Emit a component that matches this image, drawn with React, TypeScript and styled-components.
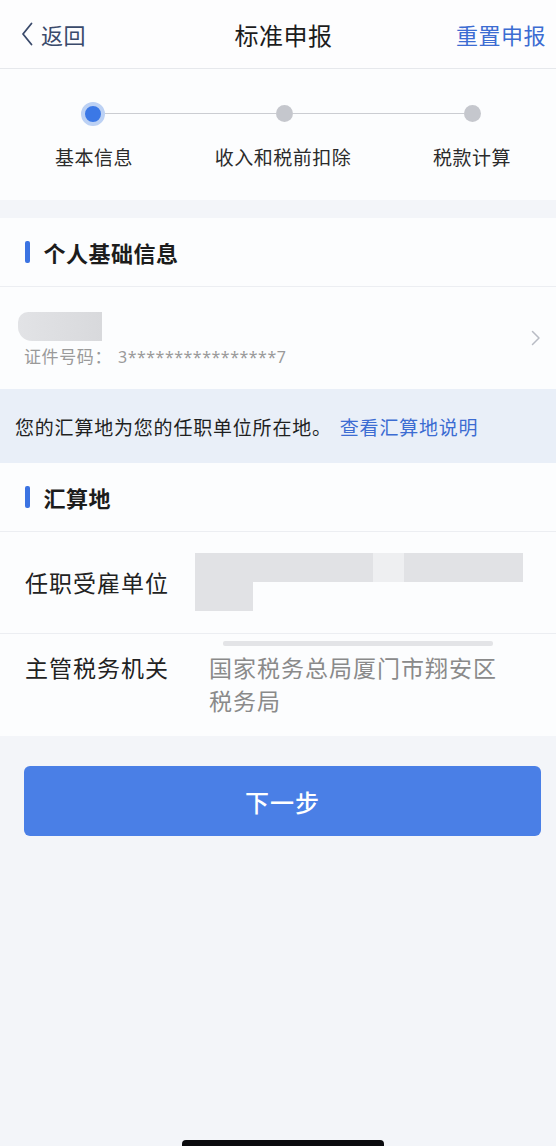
import React from 'react';
import styled, { createGlobalStyle } from 'styled-components';

const GlobalStyle = createGlobalStyle`
  html, body {
    margin: 0;
    padding: 0;
    background: #f3f5f9;
    overflow-x: hidden;
  }
  body {
    font-family: "Noto Sans CJK SC", "Noto Sans", sans-serif;
    color: #222;
  }
`;

const steps = ['基本信息', '收入和税前扣除', '税款计算'];

export default function App() {
  return (
    <Page>
      <GlobalStyle />

      <Header>
        <Back>
          <svg width="12" height="24" viewBox="0 0 12 24">
            <path d="M10.5 1.5 L2 12 L10.5 22.5" fill="none" stroke="#3a4a6b" strokeWidth="1.8" strokeLinecap="round" strokeLinejoin="round" />
          </svg>
          <BackText>返回</BackText>
        </Back>
        <Title>标准申报</Title>
        <HeaderAction>重置申报</HeaderAction>
      </Header>

      <StepsCard>
        <Track>
          <ActiveDot />
          <TrackLine />
          <Dot />
          <TrackLine />
          <Dot />
        </Track>
        <StepLabels>
          {steps.map((s) => (
            <StepLabel key={s}>{s}</StepLabel>
          ))}
        </StepLabels>
      </StepsCard>

      <Card>
        <SectionHead>
          <Bar />
          <SectionTitle>个人基础信息</SectionTitle>
        </SectionHead>
        <PersonRow>
          <PersonInfo>
            <NameBlur />
            <IdLine>
              证件号码：<IdNumber>3****************7</IdNumber>
            </IdLine>
          </PersonInfo>
          <svg width="10" height="16" viewBox="0 0 10 16">
            <path d="M1.5 1.5 L8 8 L1.5 14.5" fill="none" stroke="#b8bcc4" strokeWidth="1.5" strokeLinecap="round" strokeLinejoin="round" />
          </svg>
        </PersonRow>
      </Card>

      <Notice>
        您的汇算地为您的任职单位所在地。<NoticeLink>查看汇算地说明</NoticeLink>
      </Notice>

      <Card>
        <SectionHead>
          <Bar />
          <SectionTitle>汇算地</SectionTitle>
        </SectionHead>
        <FieldRow $align="center">
          <FieldLabel>任职受雇单位</FieldLabel>
          <Redacted>
            <RedactedLine>
              <Blur $w={178} />
              <Blur $w={31} $light />
              <Blur $w={119} />
            </RedactedLine>
            <Blur $w={58} />
          </Redacted>
        </FieldRow>
        <FieldRow $align="flex-start" $last>
          <FieldLabel $top>主管税务机关</FieldLabel>
          <ValueColumn>
            <Strip />
            <FieldValue>国家税务总局厦门市翔安区税务局</FieldValue>
          </ValueColumn>
        </FieldRow>
      </Card>

      <Footer>
        <NextButton>下一步</NextButton>
      </Footer>

      <HomeIndicator />
    </Page>
  );
}

const Page = styled.div`
  width: 556px;
  min-height: 1146px;
  display: flex;
  flex-direction: column;
  background: #f3f5f9;
`;

const Header = styled.div`
  height: 68px;
  display: flex;
  align-items: center;
  justify-content: space-between;
  padding: 0 10px 0 21px;
  background: #fdfdfe;
  border-bottom: 1px solid #e6e8ec;
`;

const Back = styled.div`
  display: flex;
  align-items: center;
  gap: 8px;
  width: 120px;
`;

const BackText = styled.span`
  font-size: 22px;
  color: #3a4a6b;
  letter-spacing: 0.5px;
`;

const Title = styled.span`
  font-size: 24px;
  font-weight: 400;
  color: #1c1c1c;
  letter-spacing: 0.5px;
`;

const HeaderAction = styled.span`
  width: 120px;
  text-align: right;
  font-size: 22px;
  color: #3c6cd2;
  letter-spacing: 0.5px;
`;

const StepsCard = styled.div`
  background: #fcfdfe;
  padding: 32px 0 30px;
  margin-bottom: 18px;
`;

const Track = styled.div`
  display: flex;
  align-items: center;
  padding: 0 75px 0 81px;
  height: 25px;
`;

const ActiveDot = styled.div`
  width: 16px;
  height: 16px;
  border-radius: 50%;
  background: #3b78e6;
  border: 4.5px solid #bcd1f4;
  flex-shrink: 0;
`;

const Dot = styled.div`
  width: 17px;
  height: 17px;
  border-radius: 50%;
  background: #c5c7cd;
  flex-shrink: 0;
`;

const TrackLine = styled.div`
  flex: 1;
  height: 1.5px;
  background: #cbcdd2;
`;

const StepLabels = styled.div`
  display: flex;
  justify-content: space-between;
  padding: 0 9px 0 19px;
  margin-top: 18px;
`;

const StepLabel = styled.span`
  width: 150px;
  text-align: center;
  font-size: 19px;
  line-height: 26px;
  letter-spacing: 0.5px;
  color: #2b2b2b;
`;

const Card = styled.div`
  background: #fcfdfe;
`;

const SectionHead = styled.div`
  height: 69px;
  display: flex;
  align-items: center;
  gap: 14px;
  padding-left: 25px;
  border-bottom: 1px solid #eceef2;
  box-sizing: border-box;
`;

const Bar = styled.div`
  width: 4.5px;
  height: 22px;
  border-radius: 2px;
  background: #3b73e2;
`;

const SectionTitle = styled.span`
  font-size: 22px;
  font-weight: 700;
  letter-spacing: 0.5px;
  color: #1c1c1c;
`;

const PersonRow = styled.div`
  height: 102px;
  display: flex;
  align-items: center;
  justify-content: space-between;
  padding: 0 15px 0 18px;
  box-sizing: border-box;
`;

const PersonInfo = styled.div`
  display: flex;
  flex-direction: column;
  gap: 4px;
  margin-top: 4px;
`;

const NameBlur = styled.div`
  width: 84px;
  height: 29px;
  background: linear-gradient(90deg, #e2e3e6 0%, #dcdde0 60%, #d8d9dc 100%);
  border-radius: 10px 0 0 14px;
`;

const IdLine = styled.span`
  padding-left: 6px;
  font-size: 17px;
  line-height: 22px;
  color: #9a9a9a;
  letter-spacing: 0.6px;
`;

const IdNumber = styled.span`
  margin-left: 6px;
  font-family: "Noto Sans", sans-serif;
  font-size: 16px;
  letter-spacing: 0.5px;
`;

const Notice = styled.div`
  height: 74px;
  display: flex;
  align-items: center;
  padding-left: 15px;
  background: #e9eff8;
  font-size: 19px;
  letter-spacing: 0.8px;
  color: #1f1f1f;
  white-space: nowrap;
`;

const NoticeLink = styled.span`
  color: #3c6cd2;
  margin-left: 8px;
`;

const FieldRow = styled.div<{ $align: string; $last?: boolean }>`
  display: flex;
  align-items: ${(p) => p.$align};
  height: ${(p) => (p.$last ? '102px' : '101px')};
  padding-left: 25px;
  border-bottom: ${(p) => (p.$last ? 'none' : '1px solid #eceef2')};
`;

const FieldLabel = styled.span<{ $top?: boolean }>`
  width: 170px;
  flex-shrink: 0;
  font-size: 23px;
  line-height: 33px;
  letter-spacing: 1px;
  color: #222;
  margin-top: ${(p) => (p.$top ? '17px' : '0')};
`;

const Redacted = styled.div`
  display: flex;
  flex-direction: column;
  margin-top: -2px;
`;

const RedactedLine = styled.div`
  display: flex;
`;

const Blur = styled.div<{ $w: number; $light?: boolean }>`
  width: ${(p) => p.$w}px;
  height: 29px;
  background: ${(p) => (p.$light ? '#eeeff1' : '#e1e2e5')};
`;

const ValueColumn = styled.div`
  display: flex;
  flex-direction: column;
  padding-top: 7px;
`;

const Strip = styled.div`
  width: 270px;
  height: 5px;
  margin-left: 28px;
  background: #e3e4e7;
  border-radius: 2px;
`;

const FieldValue = styled.div`
  width: 300px;
  margin-top: 5px;
  padding-left: 14px;
  font-size: 23px;
  line-height: 33px;
  letter-spacing: 1px;
  color: #8a8a8a;
`;

const Footer = styled.div`
  padding: 30px 15px 0 24px;
  flex: 1;
`;

const NextButton = styled.button`
  width: 100%;
  height: 70px;
  border: none;
  border-radius: 6px;
  background: #4a7fe6;
  color: #fff;
  font-family: "Noto Sans CJK SC", sans-serif;
  font-size: 24px;
  font-weight: 500;
  letter-spacing: 1px;
`;

const HomeIndicator = styled.div`
  align-self: center;
  width: 202px;
  height: 6px;
  margin: 0 0 0 10px;
  border-radius: 4px 4px 0 0;
  background: #0b0b0e;
`;
